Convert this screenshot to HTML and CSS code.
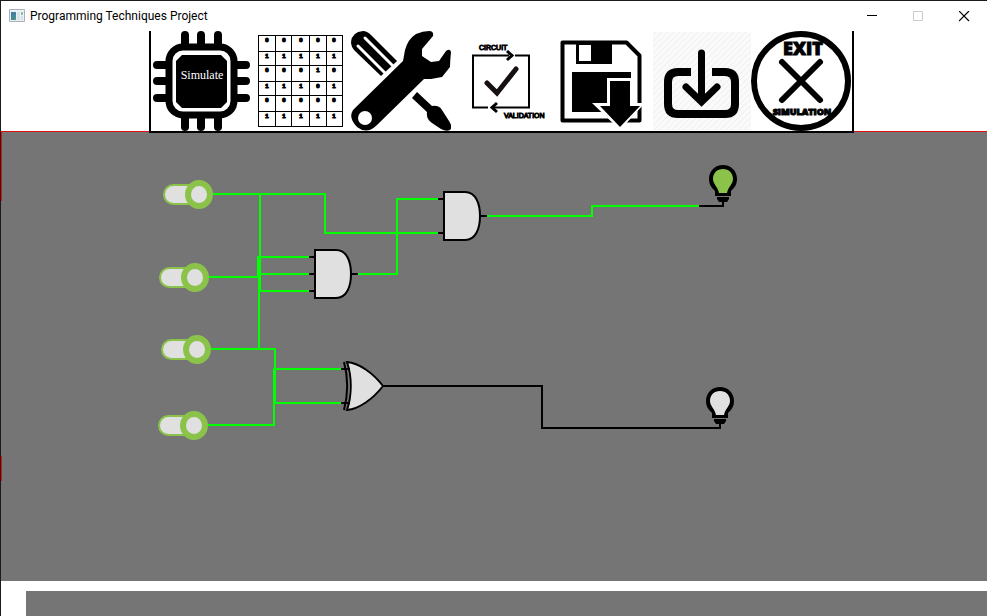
FILE: index.html
```html
<!DOCTYPE html>
<html lang="en">
<head>
<meta charset="utf-8">
<title>Programming Techniques Project</title>
<link rel="stylesheet" href="styles.css">
</head>
<body>
<div class="window">
  <header class="titlebar">
    <svg class="app-icon" viewBox="0 0 16 14" aria-hidden="true">
      <defs><linearGradient id="pane" x1="0" y1="0" x2="1" y2="1"><stop offset="0" stop-color="#3f72b8"/><stop offset="1" stop-color="#4a9b78"/></linearGradient></defs>
      <path d="M.5.5h15v12h-15z" fill="#eef1f3" stroke="#a9b1b8"/>
      <path d="M2 3h5v8H2z" fill="url(#pane)"/>
      <path d="M8 3h3v8H8z" fill="#dce3e8"/><path d="M12 3h2v3h-2z" fill="#8dbfb0"/><path d="M12 7h2v4h-2z" fill="#d5dfe6"/>
    </svg>
    <h1 class="title">Programming Techniques Project</h1>
    <div class="controls">
      <button class="control" aria-label="Minimize"><svg viewBox="0 0 11 11"><path d="M0 4.500h10" stroke="#000"/></svg></button>
      <button class="control" aria-label="Maximize" disabled><svg viewBox="0 0 11 11"><path d="M.5.5h9v9h-9z" fill="none" stroke="#ccc"/></svg></button>
      <button class="control" aria-label="Close"><svg viewBox="0 0 11 11"><path d="M0 0l10 10M10 0L0 10" stroke="#000" stroke-width="1.200"/></svg></button>
    </div>
  </header>

  <nav class="toolbar">
    <button class="tool" aria-label="Simulate">
      <svg viewBox="0 0 100 100">
        <path d="M34 4v92M50 4v92M67 4v92M6 34h89M6 50h89M6 67h89" stroke="#000" stroke-width="8" stroke-linecap="round"/>
        <rect x="18" y="16" width="65" height="68" rx="14" fill="#fff" stroke="#000" stroke-width="7"/>
        <path d="M31 24h39l6 6v41l-6 6H31l-6-6V30z"/>
        <text class="chip-text" x="51" y="48" text-anchor="middle">Simulate</text>
      </svg>
    </button>
    <button class="tool" aria-label="Truth table">
      <svg viewBox="0 0 100 100" shape-rendering="crispEdges">
        <path d="M7.500 4.500h84v91h-84zM7.500 20.500h84M7.500 34.500h84M7.500 50.500h84M7.500 64.500h84M7.500 80.500h84M24.500 4.500v91M40.500 4.500v91M58.500 4.500v91M75.500 4.500v91" fill="none" stroke="#000"/>
        <g class="cell-text" text-anchor="middle">
          <text y="11"><tspan x="16">0</tspan><tspan x="33">0</tspan><tspan x="50">0</tspan><tspan x="67">0</tspan><tspan x="83">0</tspan></text>
          <text y="27"><tspan x="16">1</tspan><tspan x="33">1</tspan><tspan x="50">1</tspan><tspan x="67">1</tspan><tspan x="83">1</tspan></text>
          <text y="41"><tspan x="16">0</tspan><tspan x="33">0</tspan><tspan x="50">0</tspan><tspan x="67">1</tspan><tspan x="83">0</tspan></text>
          <text y="57"><tspan x="16">1</tspan><tspan x="33">1</tspan><tspan x="50">1</tspan><tspan x="67">0</tspan><tspan x="83">1</tspan></text>
          <text y="71"><tspan x="16">0</tspan><tspan x="33">0</tspan><tspan x="50">0</tspan><tspan x="67">0</tspan><tspan x="83">0</tspan></text>
          <text y="87"><tspan x="16">1</tspan><tspan x="33">1</tspan><tspan x="50">1</tspan><tspan x="67">1</tspan><tspan x="83">1</tspan></text>
        </g>
      </svg>
    </button>
    <button class="tool" aria-label="Design tools">
      <svg viewBox="0 0 100 100">
        <path d="M12 0Q1 1 0 11q0 5 4 9l26 25L46 30 20 4q-4-4-8-4z"/>
        <path d="M7 15l28 28M14 7l27 27" stroke="#fff" stroke-width="3" stroke-linecap="round"/>
        <path d="M78 0q5 0 4 5L71 18v7l9 6 8-1 7-10q4-3 5 1-1 9-1 15l-8 10-11 2h-7L26 94Q16 104 6 96-3 87 2 79l50-49 2-11q3-11 11-16 7-3 13-3z"/>
        <circle cx="14" cy="87" r="7" fill="#fff"/>
        <path d="M66 61l15 14q7-1 10 4l7 11q4 6 1 9-4 2-9-1l-9-6q-6-4-5-11L61 67z"/>
      </svg>
    </button>
    <button class="tool" aria-label="Circuit validation">
      <svg viewBox="0 0 100 100">
        <path d="M58 24.500H22v52h15M64 24.500h14v52H42" fill="none" stroke="#000" stroke-width="2"/>
        <path d="M56 20l5 4.500-5 4.500M46 72l-5 4.500 5 4.500" fill="none" stroke="#000" stroke-width="3"/>
        <path d="M36 52l10 10 19-24" fill="none" stroke="#171011" stroke-width="5" stroke-linecap="round"/>
        <text class="valid-text" x="28" y="19">CIRCUIT</text>
        <text class="valid-text" x="53" y="87">VALIDATION</text>
      </svg>
    </button>
    <button class="tool" aria-label="Save">
      <svg viewBox="0 0 100 100">
        <path d="M11.500 11.500h64l13 13v65h-77z" fill="#fff" stroke="#000" stroke-width="4" stroke-linejoin="round"/>
        <path d="M25 12h36v21H25z"/><path d="M28 14h12v16H28z" fill="#fff"/>
        <path d="M21 41h59v40H21z"/>
        <path d="M56 47h26v25h12L69 99 41 72h15z" fill="#fff"/>
        <path d="M59 50h20v25h10L69 96 49 75h10z"/>
      </svg>
    </button>
    <button class="tool" aria-label="Load">
      <svg viewBox="0 0 100 100">
        <defs><pattern id="hatch" width="6" height="6" patternUnits="userSpaceOnUse"><path d="M0 6L6 0" stroke="#eee"/></pattern></defs>
        <path d="M2 1h98v98H2z" fill="#fafafa"/><path d="M2 1h98v98H2z" fill="url(#hatch)"/>
        <path d="M40 41H27q-10 0-10 10v22q0 10 10 10h47q10 0 10-10V51q0-10-10-10H61" fill="none" stroke="#000" stroke-width="8"/>
        <path d="M50.500 22v47M35 56l15.500 15L66 56" fill="none" stroke="#000" stroke-width="7" stroke-linecap="round"/>
      </svg>
    </button>
    <button class="tool" aria-label="Exit simulation">
      <svg viewBox="0 0 100 100">
        <circle cx="50" cy="50" r="47" fill="#fff" stroke="#000" stroke-width="6"/>
        <path d="M31 31l38 38M69 31L31 69" stroke="#000" stroke-width="6" stroke-linecap="round"/>
        <text class="exit-text" x="52" y="24" text-anchor="middle">EXIT</text>
        <text class="sim-text" x="51" y="84" text-anchor="middle">SIMULATION</text>
      </svg>
    </button>
  </nav>

  <main class="canvas">
    <svg class="circuit" viewBox="1 131 986 450" width="986" height="450" aria-label="Circuit">
      <defs>
        <g id="and">
          <path d="M1 1h21c11 0 15 12 15 24s-4 24-15 24H1z" fill="#e0e0e0" stroke="#000" stroke-width="2"/>
        </g>
        <g id="bulb">
          <path d="M14 0C6 0 0 6 0 14c0 6 3 9 6 12v5h16v-5c3-3 6-6 6-12C28 6 22 0 14 0z"/>
          <path d="M14 4C8 4 4 8 4 14c0 5 5 8 6 14h8c1-6 6-9 6-14 0-6-4-10-10-10z" fill="var(--glow)"/>
          <path d="M8 32h12v2l-2 3h-8l-2-3z"/>
        </g>
      </defs>
      <path d="M1.500 131v70M1.500 456v25" stroke="#e01010"/>
      <g class="wire live">
        <path d="M212 194h113v39h114"/>
        <path d="M260 194v97h50M208 277h50v-20h52"/>
        <path d="M210 349h49v-75h51"/>
        <path d="M357 274h40v-75h42"/>
        <path d="M487 216h105v-10h108"/>
        <path d="M259 349h16v54h67M208 425h66v-56h68"/>
      </g>
      <g class="wire">
        <path d="M309 257h6M309 274h6M309 291h6M350 274h8M438 199h6M438 233h6M479 216h8M699 206h24v-5"/>
        <path d="M382 386h160v42h178v-6"/>
      </g>
      <use href="#and" x="314" y="249"/>
      <use href="#and" x="443" y="191"/>
      <path d="M347 362c12 1 26 11 36 24-10 13-24 23-36 24 5-15 5-33 0-48z" fill="#e0e0e0" stroke="#000" stroke-width="2"/>
      <path d="M344 362c4 15 4 33 0 48" fill="none" stroke="#000" stroke-width="2"/>
      <path d="M341 369h9M341 403h9" stroke="#000" stroke-width="2"/>
      <use class="bulb-on" href="#bulb" x="709" y="165"/>
      <use class="bulb-off" href="#bulb" x="706" y="387"/>
    </svg>
    <input class="switch switch-a" type="checkbox" aria-label="Switch 1" checked>
    <input class="switch switch-b" type="checkbox" aria-label="Switch 2" checked>
    <input class="switch switch-c" type="checkbox" aria-label="Switch 3" checked>
    <input class="switch switch-d" type="checkbox" aria-label="Switch 4" checked>
  </main>
  <footer class="statusbar"></footer>
</div>
</body>
</html>
```
FILE: styles.css
```css
*, *::before, *::after { box-sizing: border-box; }

body {
  margin: 0;
  background: #fff;
  color: #000;
  font-family: "Noto Sans", "Open Sans", sans-serif;
}

.window {
  display: flex;
  flex-direction: column;
  min-height: 100vh;
  border-top: 1px solid #1c1a1c;
  border-left: 1px solid #1c1a1c;
}

.titlebar {
  display: flex;
  align-items: center;
  height: 30px;
  padding-left: 8px;
}

.app-icon { width: 16px; height: 14px; }

.title {
  margin: 0 0 0 5px;
  font-family: Roboto, "Open Sans", sans-serif;
  font-size: 12px;
  font-weight: 400;
  line-height: 16px;
}

.controls { display: flex; margin-left: auto; }

.control {
  display: grid;
  place-items: center;
  width: 46px;
  height: 28px;
  padding: 0;
  border: 0;
  background: none;
}

.control svg { width: 11px; height: 11px; }

.toolbar {
  position: relative;
  z-index: 1;
  display: flex;
  align-self: flex-start;
  margin: 0 0 -2px 148px;
  padding-right: 1px;
  border: solid #000;
  border-width: 0 2px 2px;
}

.tool {
  width: 100px;
  height: 100px;
  padding: 0;
  border: 0;
  background: none;
}

.tool svg { display: block; width: 100px; height: 100px; }

.chip-text { font: 12px "Liberation Serif", serif; fill: #fff; }
.cell-text { font: bold 6px "Liberation Sans", sans-serif; stroke: #000; stroke-width: 1px; }
.valid-text { font: 7px "Liberation Sans", sans-serif; stroke: #000; stroke-width: 1px; }
.exit-text { font: 900 18px "Open Sans", sans-serif; stroke: #000; stroke-width: 1px; }
.sim-text { font: 900 9px "Open Sans", sans-serif; stroke: #000; stroke-width: 1px; }

.canvas {
  position: relative;
  flex: 1;
  min-height: 450px;
  border-top: 1px solid #e01010;
  background: #757575;
}

.circuit { display: block; margin-top: -1px; }

.wire { fill: none; stroke: #000; stroke-width: 2px; }
.live { stroke: #0f0; }
.bulb-on { --glow: #8bc34a; }
.bulb-off { --glow: #e0e0e0; }

.switch {
  position: absolute;
  width: 50px;
  height: 29px;
  margin: 0;
  appearance: none;
}

.switch::before {
  content: "";
  position: absolute;
  top: 4px;
  left: 0;
  width: 46px;
  height: 21px;
  border: 2px solid #8bc34a;
  border-radius: 11px;
  background: #e0e0e0;
}

.switch::after {
  content: "";
  position: absolute;
  top: 0;
  right: 0;
  width: 28px;
  height: 29px;
  border: 6px solid #8bc34a;
  border-radius: 50%;
  background: #e0e0e0;
}

.switch-a { left: 162px; top: 48px; }
.switch-b { left: 158px; top: 131px; }
.switch-c { left: 160px; top: 203px; }
.switch-d { left: 157px; top: 279px; }

.statusbar {
  height: 25px;
  margin: 10px 0 0 25px;
  background: #757575;
}
```
